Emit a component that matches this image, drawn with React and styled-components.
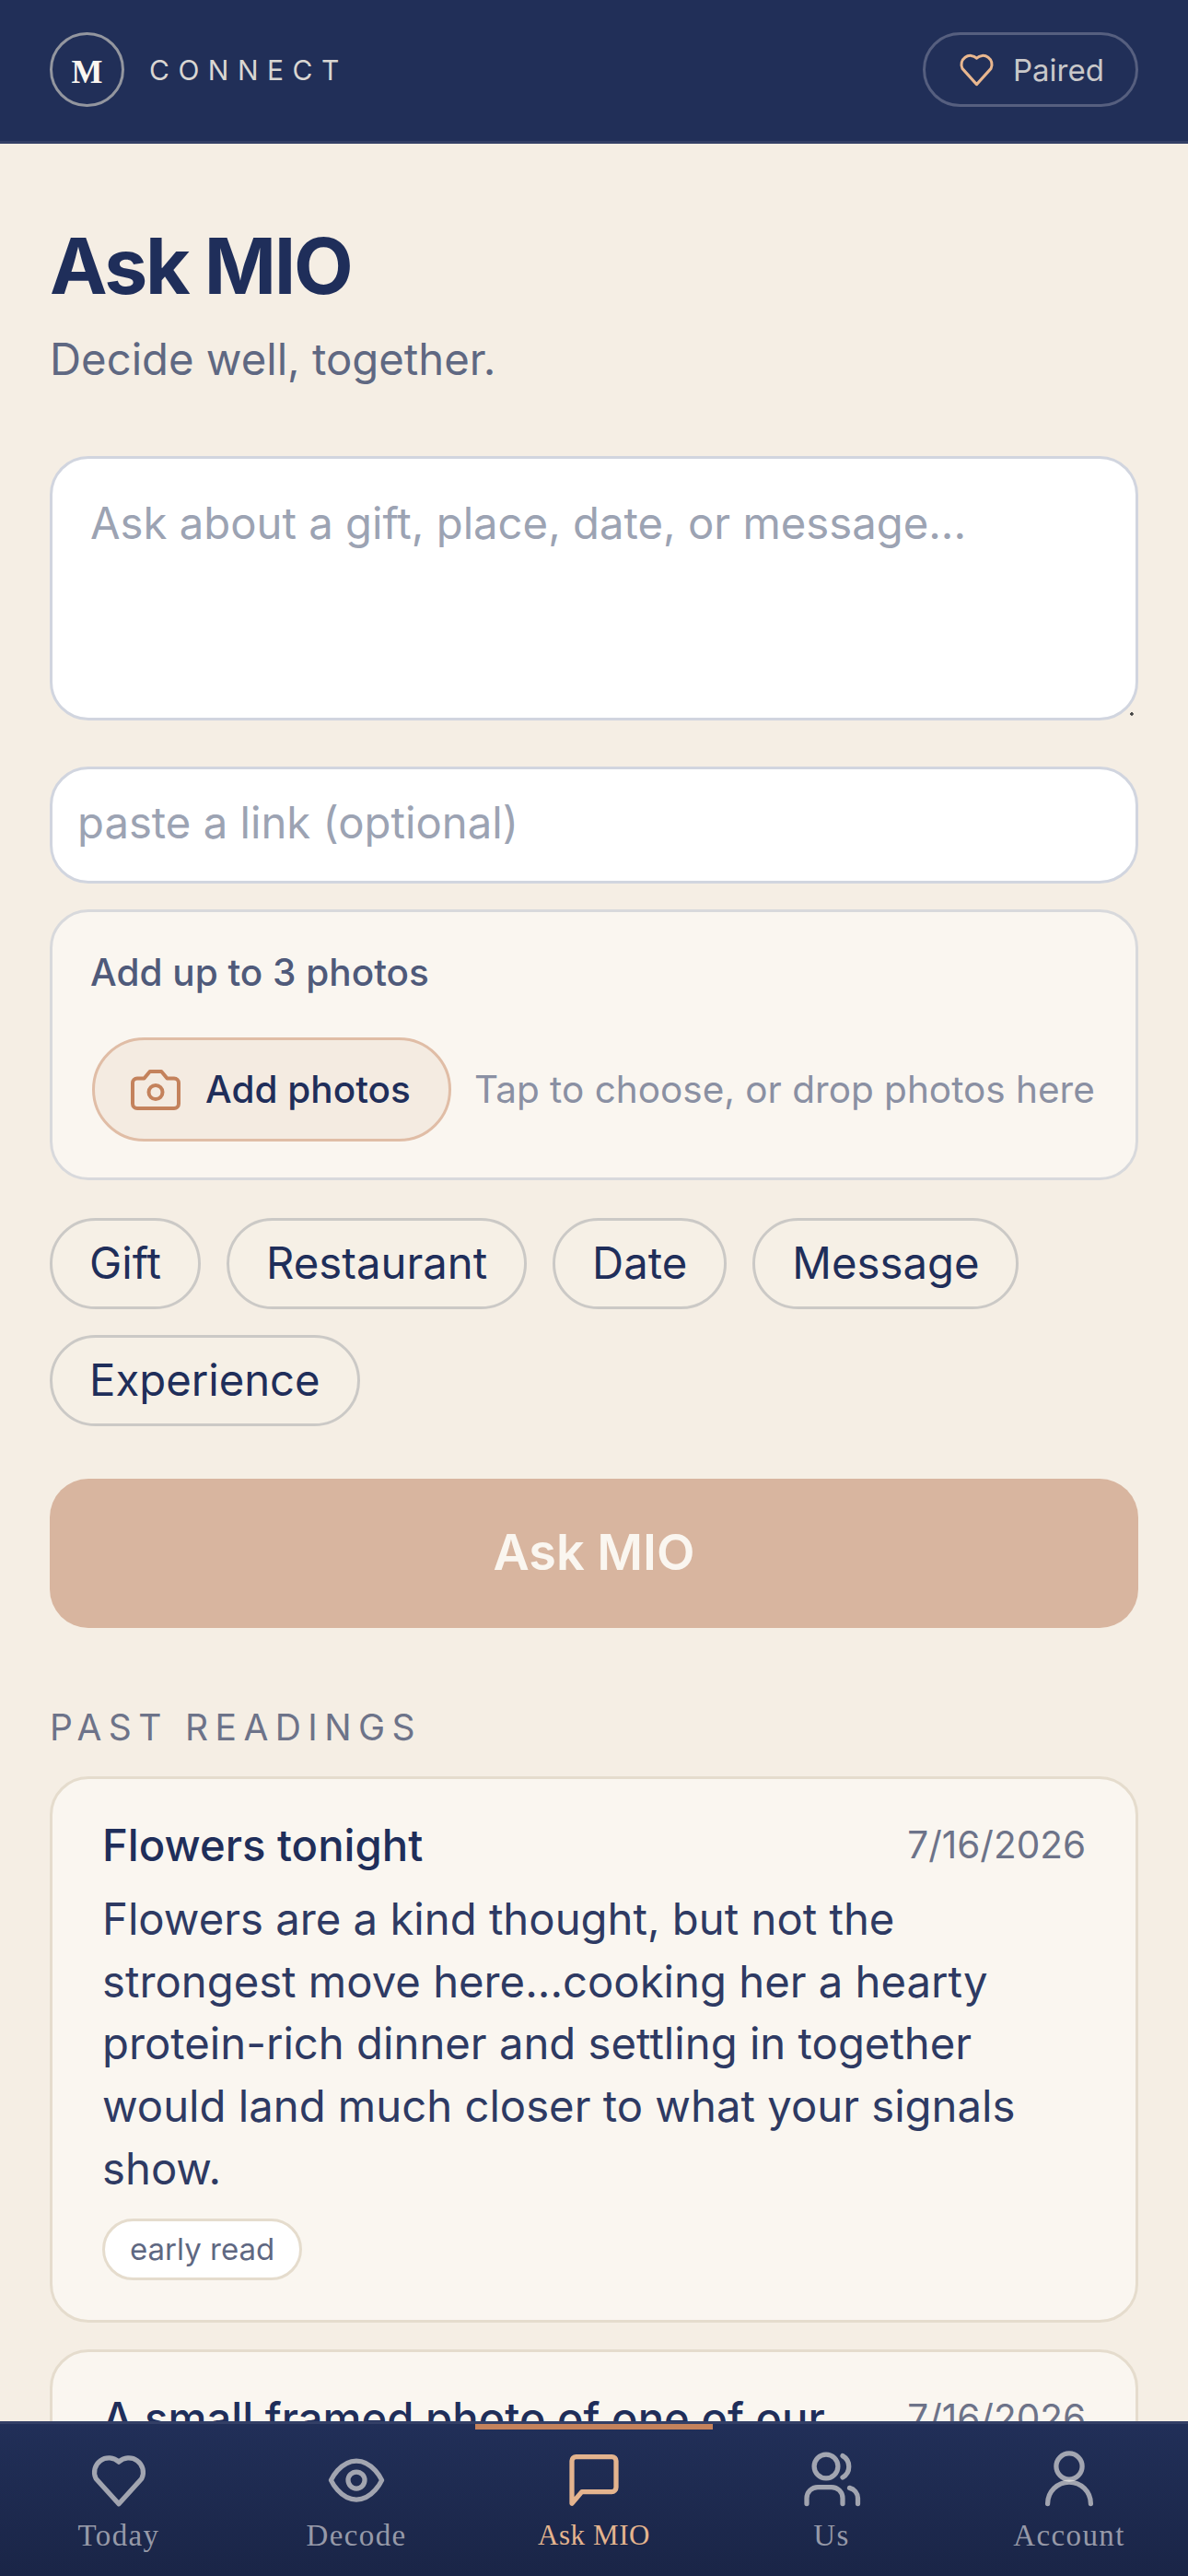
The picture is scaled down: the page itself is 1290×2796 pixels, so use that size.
import React from "react";
import styled, { createGlobalStyle } from "styled-components";

const Global = createGlobalStyle`
  html, body { margin: 0; padding: 0; height: 100%; overflow: hidden; background: #f5eee4; }
  #root { height: 100%; }
  * { box-sizing: border-box; }
  body { font-family: Inter, "Liberation Sans", sans-serif; color: #1f2e5a; }
`;

const Screen = styled.div`
  display: flex;
  flex-direction: column;
  width: 1290px;
  height: 2796px;
  background: #f5eee4;
`;

const Header = styled.header`
  flex: none;
  height: 156px;
  padding: 0 54px 3px;
  display: flex;
  align-items: center;
  justify-content: space-between;
  background: #212f58;
  border-bottom: 3px solid #333f66;
`;

const Brand = styled.div`
  display: flex;
  align-items: center;
  gap: 27px;
`;

const Monogram = styled.div`
  width: 81px;
  height: 81px;
  padding-top: 6px;
  border-radius: 50%;
  border: 3px solid #93969f;
  display: flex;
  align-items: center;
  justify-content: center;
  font-family: "Liberation Serif", serif;
  font-weight: 700;
  font-size: 36px;
  color: #faf6f0;
`;

const BrandName = styled.span`
  margin-top: 2px;
  font-size: 30px;
  letter-spacing: 9.5px;
  color: #d9d6d2;
`;

const PairedPill = styled.div`
  width: 234px;
  height: 81px;
  padding: 0 0 0 33px;
  border-radius: 41px;
  border: 3px solid #565f7f;
  display: flex;
  align-items: center;
  gap: 17px;
  color: #c9c8c9;
  font-size: 33px;
`;

const PairedText = styled.span`
  margin-top: 1px;
`;

const Main = styled.main`
  flex: 1;
  min-height: 0;
  overflow: hidden;
  padding: 82px 54px 0;
`;

const Title = styled.h1`
  margin: 0;
  font-size: 84px;
  line-height: 101px;
  font-weight: 700;
  letter-spacing: -2.4px;
  color: #1f2e5a;
`;

const Subtitle = styled.p`
  margin: 15px 0 0;
  font-size: 47.25px;
  line-height: 72px;
  color: #5f6882;
`;

const QuestionBox = styled.textarea`
  display: block;
  width: 100%;
  height: 287px;
  margin-top: 69px;
  padding: 41px 41px;
  border: 3px solid #d1d5df;
  border-radius: 42px;
  background: #fff;
  font: 400 47.25px/58px Inter, sans-serif;
  color: #1f2e5a;
  outline: none;
  &::placeholder { color: #9ca3b3; opacity: 1; }
  &::-webkit-resizer {
    background: radial-gradient(circle at 73% 73%, #444 0 1.5px, transparent 2px);
  }
`;

const LinkField = styled.input`
  display: block;
  width: 100%;
  height: 127px;
  margin-top: 50px;
  padding: 0 27px 6px;
  border: 3px solid #d1d5df;
  border-radius: 42px;
  background: #fff;
  font: 400 47.25px Inter, sans-serif;
  color: #1f2e5a;
  outline: none;
  &::placeholder { color: #9ca3b3; opacity: 1; }
`;

const PhotosPanel = styled.section`
  margin-top: 28px;
  height: 294px;
  padding: 41px 41px;
  border: 3px solid #d8d9dc;
  border-radius: 42px;
  background: #faf6f0;
`;

const PhotosLabel = styled.div`
  font-size: 40.5px;
  line-height: 50px;
  font-weight: 500;
  color: #4f5a7a;
`;

const PhotosRow = styled.div`
  margin-top: 45px;
  padding-left: 2px;
  display: flex;
  align-items: center;
  gap: 25px;
`;

const AddButton = styled.button`
  flex: none;
  width: 390px;
  height: 113px;
  padding: 0 0 0 36px;
  display: flex;
  align-items: center;
  gap: 24px;
  border-radius: 57px;
  border: 3px solid #e0bda6;
  background: #f4ebe1;
  font: 500 40.5px Inter, sans-serif;
  color: #1f2e5a;
`;

const Hint = styled.span`
  font-size: 40.5px;
  color: #8a90a3;
  white-space: nowrap;
`;

const Chips = styled.div`
  margin-top: 41px;
  display: flex;
  flex-wrap: wrap;
  gap: 28px;
`;

const Chip = styled.button`
  height: 99px;
  padding: 0 40px 3px;
  border: 3px solid #cbc9c6;
  border-radius: 50px;
  background: #f6f0e6;
  font: 400 47.25px Inter, sans-serif;
  color: #1f2e5a;
`;

const AskButton = styled.button`
  display: block;
  width: 100%;
  height: 162px;
  margin-top: 57px;
  padding: 0 0 3px;
  border: none;
  border-radius: 42px;
  background: #d8b59f;
  font: 600 54px Inter, sans-serif;
  color: #faf6f0;
`;

const SectionLabel = styled.h2`
  margin: 84px 0 0;
  font-size: 39px;
  line-height: 48px;
  font-weight: 400;
  letter-spacing: 7.4px;
  color: #6d7389;
`;

const Card = styled.article`
  margin-top: ${(p) => p.$gap}px;
  padding: 43px 54px 43px;
  border: 3px solid #e5dccd;
  border-radius: 42px;
  background: #faf6f0;
`;

const CardHead = styled.div`
  display: flex;
  align-items: flex-start;
  justify-content: space-between;
  gap: 36px;
`;

const CardTitle = styled.h3`
  margin: 0;
  font-size: 47.25px;
  line-height: 58px;
  font-weight: 500;
  color: #1f2e5a;
`;

const CardDate = styled.time`
  flex: none;
  font-size: 40.5px;
  line-height: 58px;
  color: #6d7389;
`;

const CardBody = styled.p`
  margin: 17px 0 0;
  font-size: 47.25px;
  line-height: 67.7px;
  color: #2e3a63;
`;

const Tag = styled.span`
  display: inline-flex;
  align-items: center;
  height: 67px;
  margin-top: 20px;
  padding: 0 27px;
  border: 3px solid #e5dccd;
  border-radius: 34px;
  background: #fff;
  font-size: 33px;
  color: #5f6882;
`;

const Nav = styled.nav`
  flex: none;
  position: relative;
  height: 168px;
  display: grid;
  grid-template-columns: repeat(5, 258px);
  background: linear-gradient(#212f58, #1a2547);
  border-top: 3px solid #333f66;
`;

const NavItem = styled.div`
  position: relative;
  display: flex;
  flex-direction: column;
  align-items: center;
  padding-top: 25px;
  font-family: "Liberation Serif", serif;
  font-size: ${(p) => (p.$active ? 31 : 33)}px;
  line-height: 40px;
  letter-spacing: ${(p) => (p.$active ? 0.6 : 1.4)}px;
  color: ${(p) => (p.$active ? "#e4b48e" : "#9699a8")};
  ${(p) =>
    p.$active &&
    `&::before {
      content: "";
      position: absolute;
      top: 0;
      left: 0;
      right: 0;
      height: 6px;
      background: #c4825c;
    }`}
`;

const NavLabel = styled.span`
  margin-top: 4px;
`;

const Glyph = ({ size = 72, stroke = 1.75, color = "#faf6f0", alpha = 0.6, children }) => (
  <svg
    width={size}
    height={size}
    viewBox="0 0 24 24"
    fill="none"
    stroke={color}
    strokeOpacity={alpha}
    strokeWidth={stroke}
    strokeLinecap="round"
    strokeLinejoin="round"
  >
    {children}
  </svg>
);

const heartPath = "M12 20.6 3.7 11.4A5.2 5.2 0 0 1 12 5.4 5.2 5.2 0 0 1 20.3 11.4Z";

const items = [
  {
    label: "Today",
    icon: (
      <Glyph>
        <path d={heartPath} />
      </Glyph>
    ),
  },
  {
    label: "Decode",
    icon: (
      <Glyph>
        <path d="M2.800 12S6 5 12 5s9.200 7 9.200 7-3.200 7-9.200 7-9.200-7-9.200-7Z" />
        <circle cx="12" cy="12" r="3" />
      </Glyph>
    ),
  },
  {
    label: "Ask MIO",
    active: true,
    icon: (
      <Glyph color="#e4b48e" alpha={1}>
        <path d="M20 14.600a1.600 1.600 0 0 1-1.600 1.600H7.600L4 20.400V5a1.500 1.500 0 0 1 1.500-1.500h13A1.500 1.500 0 0 1 20 5Z" />
      </Glyph>
    ),
  },
  {
    label: "Us",
    icon: (
      <Glyph>
        <circle cx="10" cy="7" r="4.300" />
        <path d="M16 3.200A4.500 4.500 0 0 1 16 11" />
        <path d="M3 20.500v-2a4 4 0 0 1 4-4h5a4 4 0 0 1 4 4v2" />
        <path d="M18.500 14.800a4 4 0 0 1 3 3.700v2" />
      </Glyph>
    ),
  },
  {
    label: "Account",
    icon: (
      <Glyph>
        <circle cx="12" cy="7" r="4.700" />
        <path d="M4.200 20.500a7.800 7.800 0 0 1 15.600 0" />
      </Glyph>
    ),
  },
];

const chips = ["Gift", "Restaurant", "Date", "Message", "Experience"];

export default function App() {
  return (
    <Screen>
      <Global />
      <Header>
        <Brand>
          <Monogram>M</Monogram>
          <BrandName>CONNECT</BrandName>
        </Brand>
        <PairedPill>
          <Glyph size={45} stroke={1.6} color="#e9b78f" alpha={1}>
            <path d={heartPath} />
          </Glyph>
          <PairedText>Paired</PairedText>
        </PairedPill>
      </Header>
      <Main>
        <Title>Ask MIO</Title>
        <Subtitle>Decide well, together.</Subtitle>
        <QuestionBox placeholder="Ask about a gift, place, date, or message..." />
        <LinkField placeholder="paste a link (optional)" />
        <PhotosPanel>
          <PhotosLabel>Add up to 3 photos</PhotosLabel>
          <PhotosRow>
            <AddButton>
              <Glyph size={60} stroke={1.6} color="#c4825c" alpha={1}>
                <path d="M14.500 4h-5L7 7H4a2 2 0 0 0-2 2v9a2 2 0 0 0 2 2h16a2 2 0 0 0 2-2V9a2 2 0 0 0-2-2h-3l-2.500-3Z" />
                <circle cx="12" cy="13" r="3" />
              </Glyph>
              Add photos
            </AddButton>
            <Hint>Tap to choose, or drop photos here</Hint>
          </PhotosRow>
        </PhotosPanel>
        <Chips>
          {chips.map((c) => (
            <Chip key={c}>{c}</Chip>
          ))}
        </Chips>
        <AskButton>Ask MIO</AskButton>
        <SectionLabel>PAST READINGS</SectionLabel>
        <Card $gap={29}>
          <CardHead>
            <CardTitle>Flowers tonight</CardTitle>
            <CardDate>7/16/2026</CardDate>
          </CardHead>
          <CardBody>
            Flowers are a kind thought, but not the strongest move here...cooking her a hearty
            protein-rich dinner and settling in together would land much closer to what your
            signals show.
          </CardBody>
          <Tag>early read</Tag>
        </Card>
        <Card $gap={29}>
          <CardHead>
            <CardTitle>A small framed photo of one of our favorite days</CardTitle>
            <CardDate>7/16/2026</CardDate>
          </CardHead>
        </Card>
      </Main>
      <Nav>
        {items.map((it) => (
          <NavItem key={it.label} $active={it.active}>
            {it.icon}
            <NavLabel>{it.label}</NavLabel>
          </NavItem>
        ))}
      </Nav>
    </Screen>
  );
}
